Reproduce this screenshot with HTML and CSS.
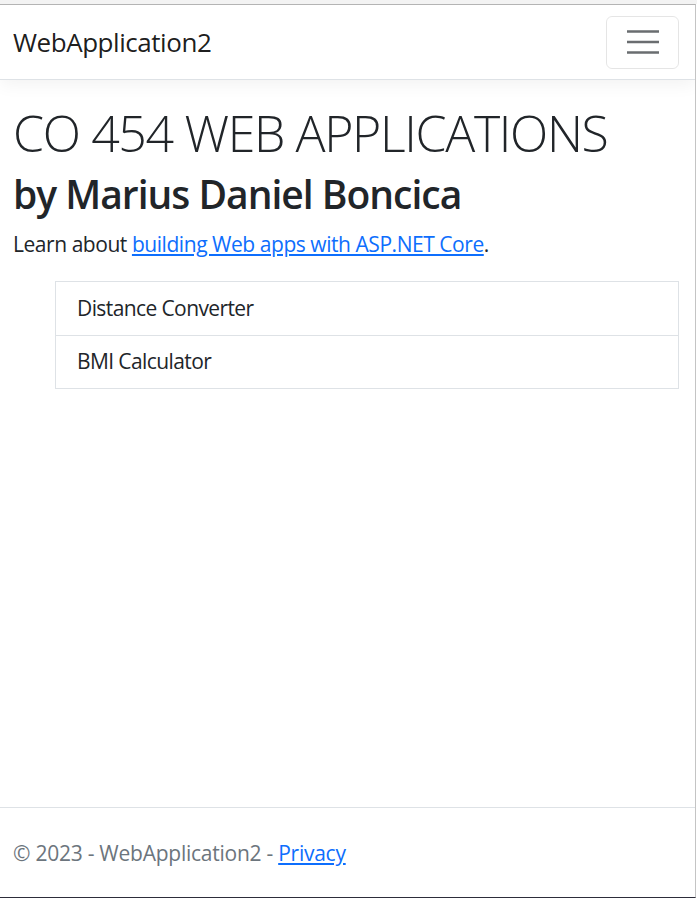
FILE: index.html
```html
<!DOCTYPE html>
<html lang="en">
<head>
<meta charset="utf-8">
<title>WebApplication2</title>
<link rel="stylesheet" href="styles.css">
</head>
<body>
<div class="chrome-top"></div>
<div class="window">
  <header class="navbar">
    <a class="brand" href="#">WebApplication2</a>
    <button class="toggler" type="button" aria-label="Toggle navigation">
      <svg class="toggler-icon" width="32" height="26" viewBox="0 0 32 26" aria-hidden="true">
        <path d="M0 2.5h32M0 13h32M0 23.5h32" stroke="#6a6d70" stroke-width="2.6" fill="none"/>
      </svg>
    </button>
  </header>
  <main class="main">
    <h1 class="display">CO 454 WEB APPLICATIONS</h1>
    <h2 class="subtitle">by Marius Daniel Boncica</h2>
    <p class="lead-text">Learn about <a href="#">building Web apps with ASP.NET Core</a>.</p>
    <ul class="list-wrap">
      <li class="list-group">
        <a class="list-item" href="#">Distance Converter</a>
        <a class="list-item" href="#">BMI Calculator</a>
      </li>
    </ul>
  </main>
  <footer class="footer">
    &copy; 2023 - WebApplication2 - <a href="#">Privacy</a>
  </footer>
</div>
</body>
</html>
```
FILE: styles.css
```css
html, body {
  margin: 0;
  padding: 0;
  background: #ffffff;
}
body {
  font-family: "Open Sans", "Noto Sans", sans-serif;
  font-size: 21px;
  line-height: 1.5;
  letter-spacing: -0.45px;
  color: #212529;
}
.chrome-top {
  height: 4px;
  background: #f3f3f3;
}
.window {
  box-sizing: border-box;
  width: 696px;
  height: 894px;
  border-top: 1px solid #b4b4b4;
  border-right: 1px solid #c4c4c4;
  border-bottom: 1px solid #2d2d3a;
  display: flex;
  flex-direction: column;
  overflow: hidden;
}
.navbar {
  display: flex;
  align-items: center;
  justify-content: space-between;
  padding: 11px 16px 10px 13px;
  border-bottom: 1px solid #dee2e6;
  box-shadow: 0 5px 16px rgba(0, 0, 0, 0.05);
  margin-bottom: 21px;
  flex: none;
}
.brand {
  font-size: 26px;
  letter-spacing: -0.45px;
  color: rgba(0, 0, 0, 0.9);
  text-decoration: none;
  line-height: 1.5;
}
.toggler {
  box-sizing: border-box;
  width: 73px;
  height: 53px;
  border: 1px solid rgba(0, 0, 0, 0.1);
  border-radius: 6px;
  background: transparent;
  display: flex;
  align-items: center;
  justify-content: center;
  padding: 0 0 2px 0;
}
.toggler-icon {
  display: block;
}
.main {
  flex: 1;
  padding: 2px 16px 0 13px;
}
.display {
  font-size: 50px;
  font-weight: 300;
  line-height: 60px;
  letter-spacing: -1.35px;
  margin: 0 0 6.5px 0;
}
.subtitle {
  font-size: 39px;
  font-weight: 600;
  line-height: 47px;
  letter-spacing: -1px;
  margin: 0 0 12px 0;
}
.lead-text {
  margin: 0 0 21px 0;
}
a {
  color: #0d6efd;
}
.list-wrap {
  list-style: none;
  margin: 0;
  padding: 0 0 0 42px;
}
.list-group {
  display: flex;
  flex-direction: column;
  border: 1px solid #dee2e6;
  border-radius: 0;
}
.list-item {
  display: block;
  padding: 10.5px 21px;
  color: #212529;
  letter-spacing: -0.6px;
  text-decoration: none;
}
.list-item + .list-item {
  border-top: 1px solid #dee2e6;
}
.footer {
  flex: none;
  box-sizing: border-box;
  height: 90px;
  border-top: 1px solid #dee2e6;
  padding: 0 13px;
  line-height: 90px;
  letter-spacing: -0.25px;
  color: #6c757d;
  white-space: nowrap;
}
```
